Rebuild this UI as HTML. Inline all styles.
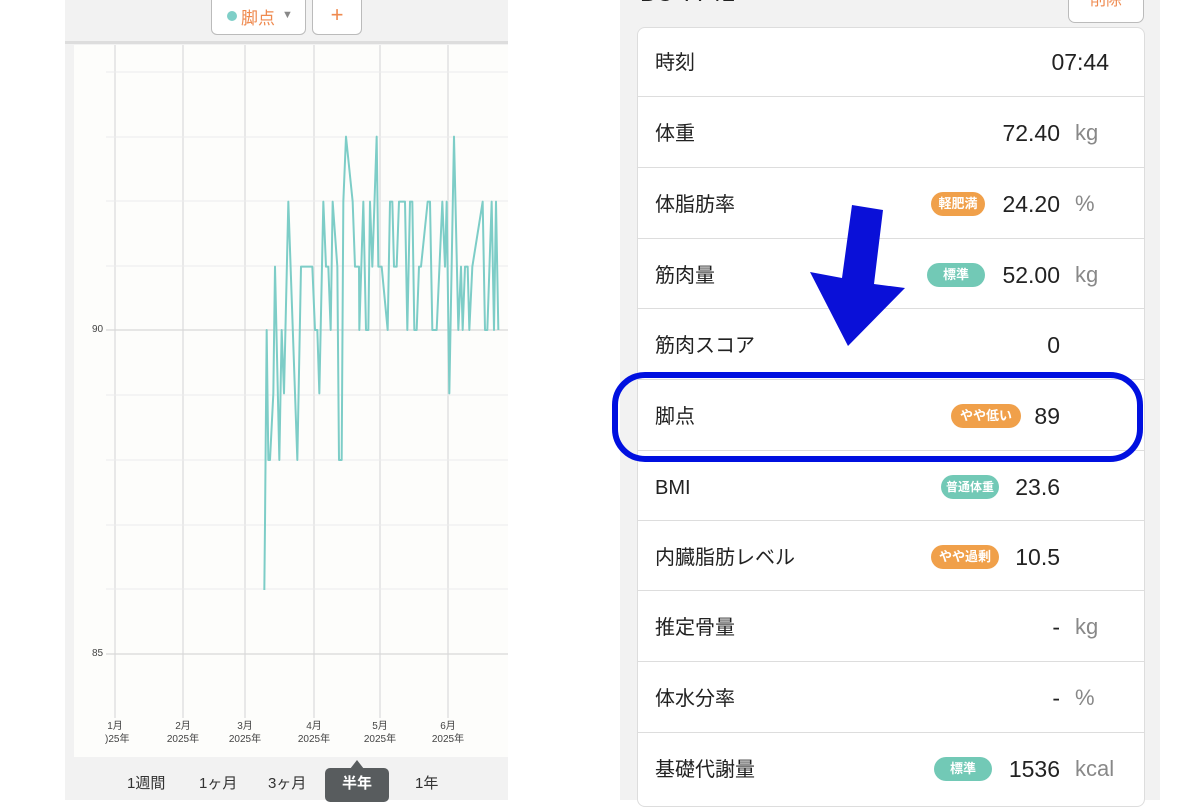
<!DOCTYPE html>
<html><head><meta charset="utf-8"><style>
*{margin:0;padding:0;box-sizing:border-box}
body{width:1200px;height:800px;background:#fff;position:relative;overflow:hidden;font-family:"Liberation Sans","Noto Sans CJK JP",sans-serif;color:#222}
.abs{position:absolute}
.row{position:absolute;left:638px;width:506px;height:71px;border-top:1px solid #ddd}
.row .l{position:absolute;left:17px;top:2px;line-height:70px;font-size:20px}
.row .v{position:absolute;right:84px;top:1px;line-height:70px;font-size:23px}
.row .u{position:absolute;left:437px;top:1px;line-height:70px;font-size:22px;color:#888}
.badge{position:absolute;top:24px;height:24px;border-radius:12px;color:#fff;font-size:13px;font-weight:bold;line-height:24px;text-align:center}
.o{background:#f0a04a}.g{background:#72c9b6}
.tab{position:absolute;top:772px;font-size:15px;color:#333}
.ax{position:absolute;font-size:10px;color:#444;text-align:center;width:50px;line-height:13px}
</style></head><body>
<!-- left panel -->
<div class="abs" style="left:65px;top:0;width:443px;height:800px;background:#f2f2f2"></div>
<div class="abs" style="left:65px;top:41px;width:443px;height:3px;background:#ddd"></div>
<div class="abs" style="left:211px;top:-6px;width:95px;height:41px;background:#fff;border:1px solid #bbb;border-radius:6px"></div>
<div class="abs" style="left:227px;top:11px;width:10px;height:10px;border-radius:50%;background:#7fcfc8"></div>
<div class="abs" style="left:241px;top:4px;font-size:17px;color:#ef8a4f">脚点</div>
<div class="abs" style="left:282px;top:9px;font-size:11px;color:#888">▼</div>
<div class="abs" style="left:312px;top:-6px;width:50px;height:41px;background:#fff;border:1px solid #bbb;border-radius:6px;text-align:center;font-size:22px;line-height:40px;color:#ef8a4f">+</div>
<div class="abs" style="left:74px;top:45px;width:434px;height:712px;background:#fdfdfb"></div>
<svg class="abs" style="left:0;top:0" width="520" height="800">
<g stroke="#e2e2e2" stroke-width="1.5">
<line x1="115" y1="45" x2="115" y2="718"/><line x1="183" y1="45" x2="183" y2="718"/><line x1="245" y1="45" x2="245" y2="718"/><line x1="314" y1="45" x2="314" y2="718"/><line x1="380" y1="45" x2="380" y2="718"/><line x1="448" y1="45" x2="448" y2="718"/>
</g>
<g stroke="#ececec" stroke-width="1">
<line x1="106" y1="72" x2="508" y2="72"/><line x1="106" y1="137" x2="508" y2="137"/><line x1="106" y1="201" x2="508" y2="201"/><line x1="106" y1="266" x2="508" y2="266"/><line x1="106" y1="395" x2="508" y2="395"/><line x1="106" y1="460" x2="508" y2="460"/><line x1="106" y1="525" x2="508" y2="525"/><line x1="106" y1="589" x2="508" y2="589"/>
</g>
<g stroke="#d8d8d8" stroke-width="1.2"><line x1="106" y1="330" x2="508" y2="330"/><line x1="106" y1="654" x2="508" y2="654"/></g>
<g transform="translate(240,120) scale(0.33333)">
<polyline fill="none" stroke="#7dcdc7" stroke-width="2" vector-effect="non-scaling-stroke" stroke-linejoin="round" points="73,1410 75,1210 80,630 85,1020 90,1020 100,820 105,440 118,1020 125,630 132,820 145,245 172,1020 183,440 217,440 225,630 232,630 238,820 250,245 258,440 265,440 272,630 278,245 292,440 297,1020 305,1020 310,245 318,50 338,245 345,440 357,440 358,630 370,245 378,630 385,630 390,245 397,440 410,50 415,440 425,440 443,630 450,245 457,245 462,440 470,440 477,245 495,245 502,630 510,245 517,245 523,630 530,630 537,440 543,440 563,245 570,245 577,630 590,630 607,245 615,440 620,245 628,820 642,50 655,630 663,440 668,630 675,440 683,440 688,630 697,440 728,245 735,630 742,630 755,245 762,630 768,245 775,630"/>
</g>
</svg>
<div class="abs" style="left:92px;top:324px;font-size:10px;color:#444">90</div>
<div class="abs" style="left:92px;top:648px;font-size:10px;color:#444">85</div>
<div class="ax" style="left:158px;top:720px">2月<br>2025年</div>
<div class="ax" style="left:220px;top:720px">3月<br>2025年</div>
<div class="ax" style="left:289px;top:720px">4月<br>2025年</div>
<div class="ax" style="left:355px;top:720px">5月<br>2025年</div>
<div class="ax" style="left:423px;top:720px">6月<br>2025年</div>
<div class="ax" style="left:95px;top:720px;width:40px;text-align:center;overflow:hidden">1月</div>
<div class="abs" style="left:105px;top:733px;font-size:10px;color:#444;line-height:13px">)25年</div>
<div class="tab" style="left:127px">1週間</div>
<div class="tab" style="left:199px">1ヶ月</div>
<div class="tab" style="left:268px">3ヶ月</div>
<div class="abs" style="left:325px;top:768px;width:64px;height:34px;background:#585c5e;border-radius:5px;color:#fff;font-weight:bold;font-size:15px;text-align:center;line-height:32px">半年</div>
<div class="abs" style="left:350px;top:760px;width:0;height:0;border-left:7px solid transparent;border-right:7px solid transparent;border-bottom:9px solid #585c5e"></div>
<div class="tab" style="left:415px">1年</div>
<!-- right panel -->
<div class="abs" style="left:620px;top:0;width:540px;height:800px;background:#f2f2f2"></div>
<div class="abs" style="left:640px;top:-20px;font-size:24px;color:#222">BC-774L</div>
<div class="abs" style="left:1068px;top:-10px;width:76px;height:33px;background:#fff;border:1px solid #bbb;border-radius:7px;text-align:center;color:#ef8a4f;font-size:16px;line-height:20px">削除</div>
<div class="abs" style="left:637px;top:27px;width:508px;height:780px;background:#fff;border:1px solid #ddd;border-radius:8px"></div>
<div class="row" style="top:26px;border-top:none"><div class="l">時刻</div><div class="v" style="right:35px">07:44</div></div>
<div class="row" style="top:96px"><div class="l">体重</div><div class="v">72.40</div><div class="u">kg</div></div>
<div class="row" style="top:167px"><div class="l">体脂肪率</div><div class="badge o" style="left:293px;width:54px">軽肥満</div><div class="v">24.20</div><div class="u">%</div></div>
<div class="row" style="top:238px"><div class="l">筋肉量</div><div class="badge g" style="left:289px;width:58px">標準</div><div class="v">52.00</div><div class="u">kg</div></div>
<div class="row" style="top:308px"><div class="l">筋肉スコア</div><div class="v">0</div></div>
<div class="row" style="top:379px"><div class="l">脚点</div><div class="badge o" style="left:313px;width:70px">やや低い</div><div class="v">89</div></div>
<div class="row" style="top:450px"><div class="l">BMI</div><div class="badge g" style="left:303px;width:58px;font-size:12px">普通体重</div><div class="v">23.6</div></div>
<div class="row" style="top:520px"><div class="l">内臓脂肪レベル</div><div class="badge o" style="left:293px;width:68px">やや過剰</div><div class="v">10.5</div></div>
<div class="row" style="top:590px"><div class="l">推定骨量</div><div class="v">-</div><div class="u">kg</div></div>
<div class="row" style="top:661px"><div class="l">体水分率</div><div class="v">-</div><div class="u">%</div></div>
<div class="row" style="top:732px"><div class="l">基礎代謝量</div><div class="badge g" style="left:296px;width:58px">標準</div><div class="v">1536</div><div class="u">kcal</div></div>
<svg class="abs" style="left:0;top:0" width="1200" height="800">
<polygon points="852,205 883,210 874,284 905,288 848,346 810,272 842,278" fill="#0a10d8"/>
<rect x="615" y="375" width="525" height="84" rx="30" fill="none" stroke="#0010e0" stroke-width="6"/>
</svg>
</body></html>
